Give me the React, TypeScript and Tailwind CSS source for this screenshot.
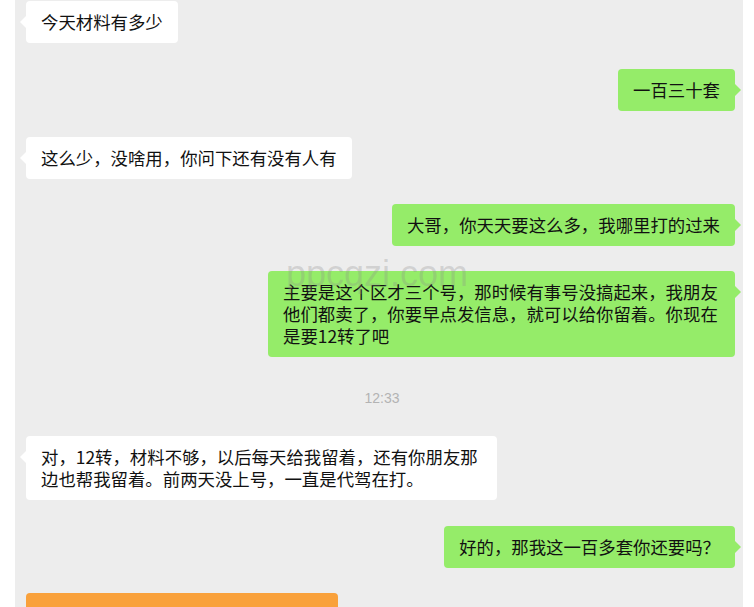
import React from "react";

const FONT = { fontFamily: '"Noto Sans CJK SC", "Noto Sans", sans-serif' };

function Left({ lines, mt, w }: { lines: string[]; mt: string; w?: string }) {
  return (
    <div className={`relative shrink-0 self-start ml-[11px] ${mt}`}>
      <div className="absolute left-[-6px] top-[15px] w-0 h-0 border-y-[6px] border-y-transparent border-r-[6px] border-r-white" />
      <div className={`bg-white rounded-[4px] px-[15px] py-[10px] text-[17.4px] leading-[22px] text-[#111111] whitespace-nowrap ${w ?? ""}`}>
        {lines.map((l, i) => (
          <div key={i}>{l}</div>
        ))}
      </div>
    </div>
  );
}

function Right({ lines, mt, w }: { lines: string[]; mt: string; w?: string }) {
  return (
    <div className={`relative shrink-0 self-end mr-[8px] ${mt}`}>
      <div className="absolute right-[-6px] top-[15px] w-0 h-0 border-y-[6px] border-y-transparent border-l-[6px] border-l-[#95ec69]" />
      <div className={`bg-[#95ec69] rounded-[4px] px-[15px] py-[10px] text-[17.4px] leading-[22px] text-[#111111] whitespace-nowrap ${w ?? ""}`}>
        {lines.map((l, i) => (
          <div key={i}>{l}</div>
        ))}
      </div>
    </div>
  );
}

export default function App() {
  return (
    <div className="relative w-[754px] h-[607px] bg-white overflow-hidden" style={FONT}>
      <div className="ml-[15px] w-[728px] h-[607px] bg-[#ededed] flex flex-col pt-[1px] overflow-hidden">
        <Left lines={["今天材料有多少"]} mt="mt-0" />
        <Right lines={["一百三十套"]} mt="mt-[26px]" />
        <Left lines={["这么少，没啥用，你问下还有没有人有"]} mt="mt-[26px]" />
        <Right lines={["大哥，你天天要这么多，我哪里打的过来"]} mt="mt-[25px]" />
        <Right
          lines={[
            "主要是这个区才三个号，那时候有事号没搞起来，我朋友",
            "他们都卖了，你要早点发信息，就可以给你留着。你现在",
            "是要12转了吧",
          ]}
          mt="mt-[25px]"
          w="w-[467px]"
        />
        <div
          className="h-[79px] shrink-0 flex items-center justify-center text-[14px] text-[#b3b3b3] pl-[6px] pt-[3px]"
          style={{ fontFamily: '"Liberation Sans", Arial, sans-serif' }}
        >
          12:33
        </div>
        <Left
          lines={[
            "对，12转，材料不够，以后每天给我留着，还有你朋友那",
            "边也帮我留着。前两天没上号，一直是代驾在打。",
          ]}
          mt="mt-0"
          w="w-[471px]"
        />
        <Right lines={["好的，那我这一百多套你还要吗？"]} mt="mt-[26px]" />
        <div className="ml-[11px] mt-[25px] w-[312px] h-[40px] bg-[#f9a13b] rounded-t-[4px] shrink-0" />
      </div>
      <div
        className="absolute left-[286px] top-[256px] text-[36px] leading-[36px] text-[rgba(140,140,140,0.28)] pointer-events-none"
        style={{ fontFamily: '"Liberation Sans", Arial, sans-serif' }}
      >
        ppcqzi.com
      </div>
    </div>
  );
}
